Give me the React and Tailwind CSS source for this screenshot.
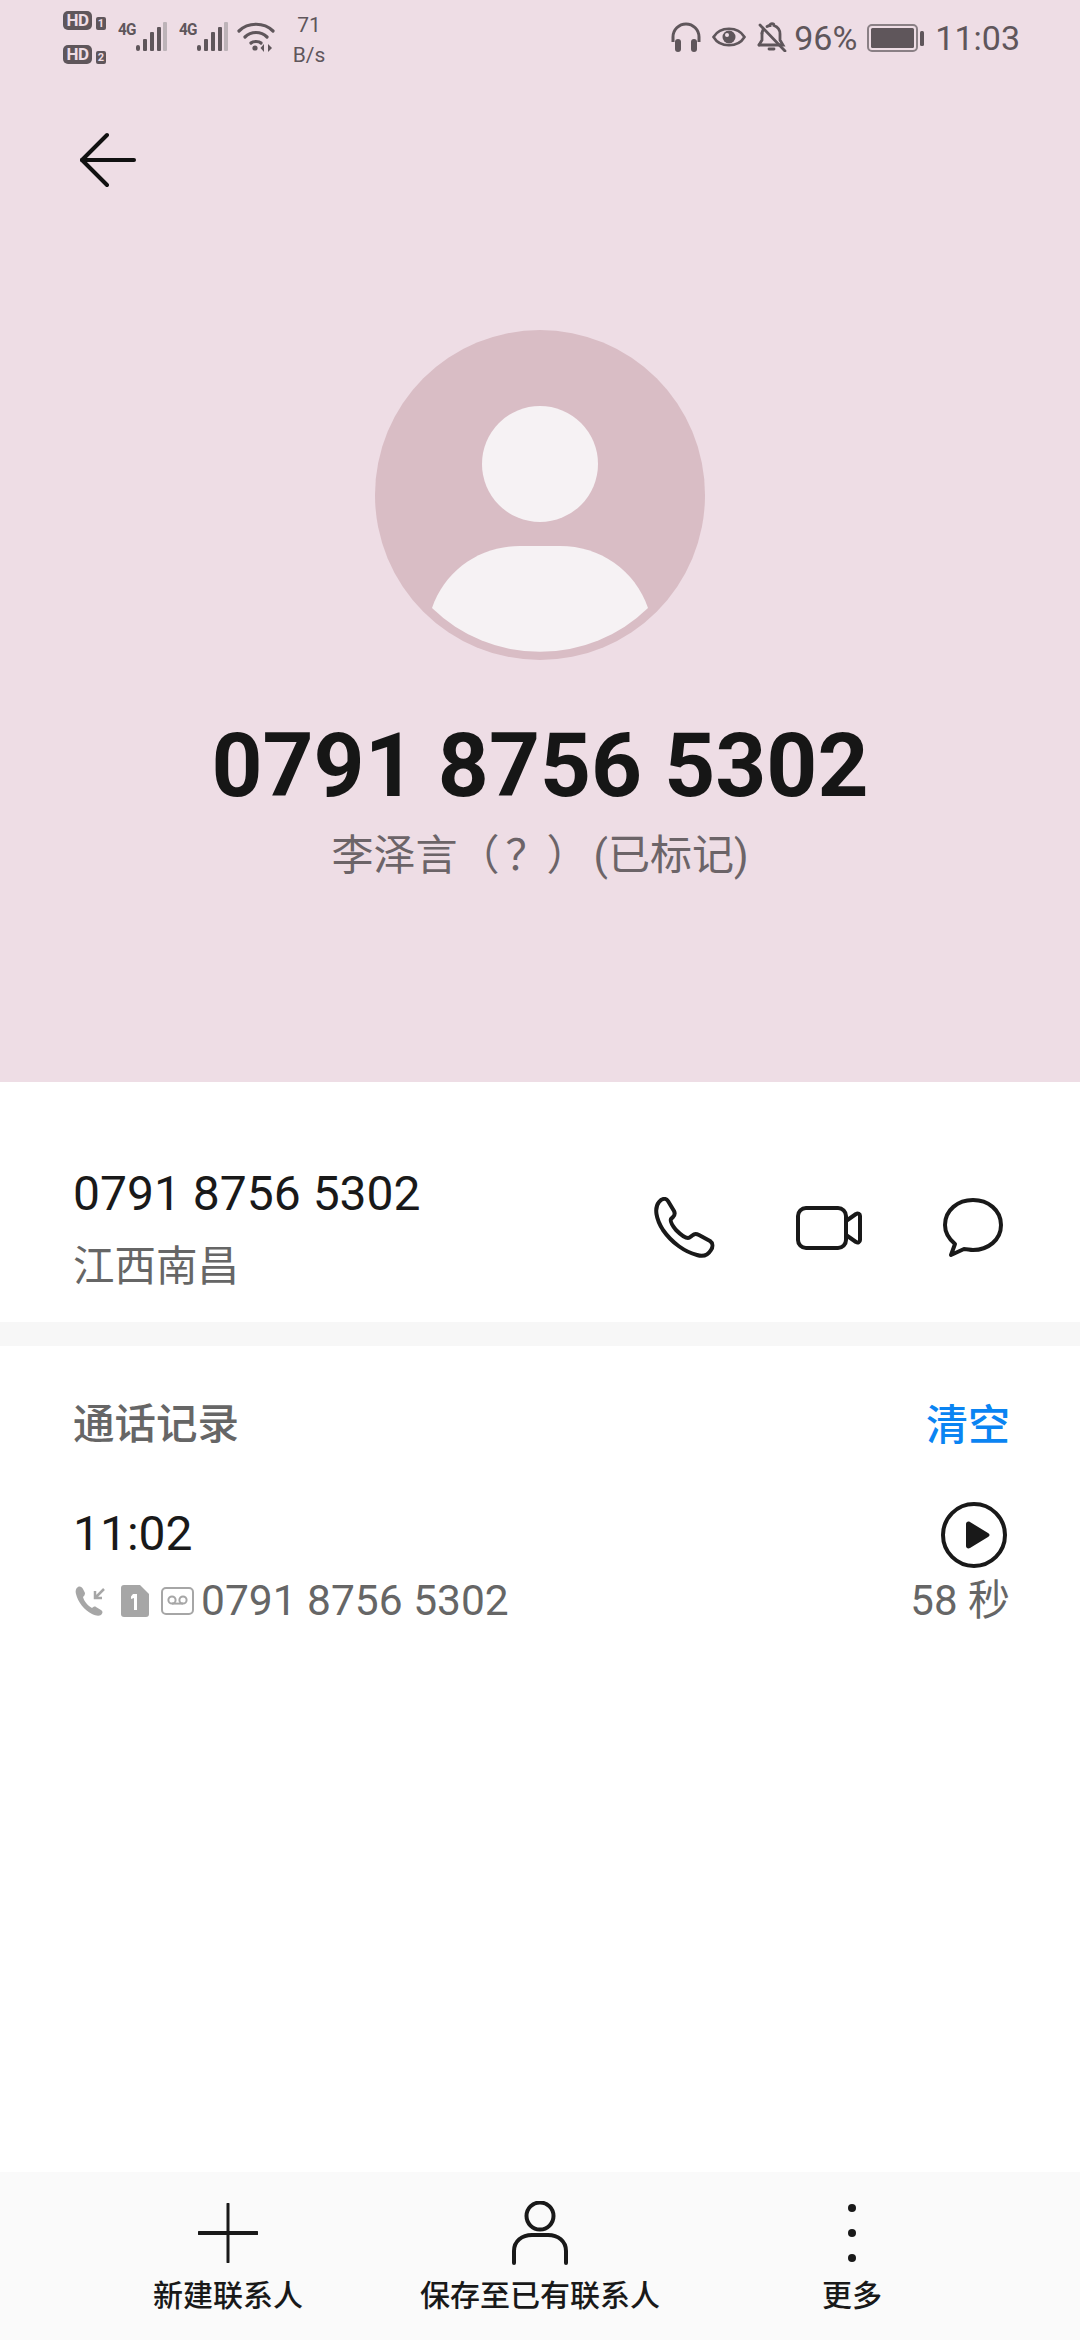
import React from 'react'

const font = { fontFamily: 'Roboto, "Noto Sans CJK SC", sans-serif' }

function Bars() {
  return (
    <svg width="32" height="30" viewBox="0 0 32 30" className="mt-[22px]">
      <rect x="1" y="23" width="4" height="6" rx="2" fill="#5f565b" />
      <rect x="8" y="17" width="4" height="12" rx="1" fill="#5f565b" />
      <rect x="15" y="10" width="4" height="19" rx="1" fill="#5f565b" />
      <rect x="22" y="5" width="4" height="24" rx="1" fill="#5f565b" />
      <rect x="28" y="0" width="4" height="29" rx="1" fill="#bdb3b8" />
    </svg>
  )
}

function Sim({ n, mt }) {
  return (
    <div className={`flex items-end gap-[4px] ${mt}`}>
      <div className="w-[29px] h-[19px] rounded-[5px] bg-[#5f565b] flex items-center justify-center text-[#eedde5] text-[17px] tracking-[-0.5px] leading-none font-bold">HD</div>
      <div className="w-[10px] h-[13px] rounded-[2px] bg-[#5f565b] flex items-center justify-center text-[#eedde5] text-[11px] leading-none font-bold">{n}</div>
    </div>
  )
}

function FourG() {
  return <span className="w-[17px] ml-[12px] mt-[21px] text-[17px] leading-[16px] font-bold tracking-[-1px] scale-x-90 origin-left">4G</span>
}

function StatusBar() {
  return (
    <div className="h-[72px] flex justify-between pl-[63px] pr-[60px] text-[#5f565b]">
      <div className="flex items-start">
        <div className="flex flex-col pt-[11px]">
          <Sim n="1" />
          <Sim n="2" mt="mt-[15px]" />
        </div>
        <FourG />
        <Bars />
        <FourG />
        <Bars />
        <svg width="38" height="30" viewBox="0 0 38 30" fill="none" stroke="#5f565b" strokeWidth="3.2" strokeLinecap="round" className="ml-[9px] mt-[22px]">
          <path d="M2 9C11 0 27 0 36 9" />
          <path d="M8 15C14 9 24 9 30 15" />
          <path d="M14 21C16 19 22 19 24 21" />
          <circle cx="18" cy="26" r="2.6" fill="#5f565b" stroke="none" />
          <path d="M27 22L23.5 26L27 30ZM31 22L35 26L31 30Z" fill="#5f565b" stroke="none" />
        </svg>
        <div className="w-[40px] ml-[14px] mt-[10px] flex flex-col items-center text-[21px] leading-[30px]">
          <span>71</span>
          <span>B/s</span>
        </div>
      </div>
      <div className="flex items-start">
        <svg width="32" height="30" viewBox="0 0 32 30" fill="none" className="mt-[22px]">
          <path d="M3 20V15A13 13 0 0 1 29 15V20" stroke="#5f565b" strokeWidth="3" />
          <rect x="5" y="17" width="6" height="13" rx="3" fill="#5f565b" />
          <rect x="21" y="17" width="6" height="13" rx="3" fill="#5f565b" />
        </svg>
        <svg width="34" height="24" viewBox="0 0 34 24" fill="none" className="ml-[10px] mt-[25px]">
          <path d="M1.5 12C8 1 26 1 32.5 12C26 23 8 23 1.5 12Z" stroke="#5f565b" strokeWidth="2.6" />
          <circle cx="17" cy="12" r="6.5" fill="#5f565b" />
          <circle cx="15" cy="10" r="2" fill="#eedde5" />
        </svg>
        <svg width="30" height="30" viewBox="0 0 30 30" fill="none" stroke="#5f565b" strokeWidth="2.8" strokeLinecap="round" className="ml-[11px] mt-[22px]">
          <path d="M5 11.5C5 10 5.5 9 6 8M10 4.5C11 4 12 3.5 13 3.5C13 1 17 1 17 3.5C21 5 23 8 23 12V18L26 23H2" />
          <path d="M5 11V18L2 23" />
          <path d="M12 27H17" />
          <path d="M3 3L28 29" />
        </svg>
        <span className="ml-[7px] mt-[19px] text-[34px] leading-[38px]">96%</span>
        <svg width="57" height="28" viewBox="0 0 57 28" className="ml-[10px] mt-[24px]">
          <rect x="1" y="1" width="49" height="26" rx="4" fill="none" stroke="#8a8085" strokeWidth="2" />
          <rect x="4" y="4" width="43" height="20" rx="1.5" fill="#5f565b" />
          <rect x="53" y="7" width="4" height="15" rx="1.5" fill="#5f565b" />
        </svg>
        <span className="ml-[11px] mt-[19px] text-[34px] leading-[38px]">11:03</span>
      </div>
    </div>
  )
}

function Header() {
  return (
    <section className="h-[1082px] bg-[#eedde5] shrink-0">
      <StatusBar />
      <div className="pl-[80px] pt-[60px]">
        <svg width="56" height="56" viewBox="0 0 56 56" fill="none" stroke="#111" strokeWidth="4" strokeLinecap="round" strokeLinejoin="round" className="block">
          <path d="M2 28H54" />
          <path d="M27 3L2 28L27 53" />
        </svg>
      </div>
      <div className="flex justify-center mt-[142px]">
        <svg width="330" height="330" viewBox="0 0 330 330" className="block">
          <circle cx="165" cy="165" r="165" fill="#d9bdc5" />
          <circle cx="165" cy="134" r="58" fill="#f6f2f4" />
          <path d="M57 278C70 240 105 216 145 216H185C225 216 260 240 273 278A155 155 0 0 1 57 278Z" fill="#f6f2f4" />
        </svg>
      </div>
      <h1 className="mt-[51px] text-center text-[89px] leading-[110px] font-bold text-[#161616]">0791 8756 5302</h1>
      <p className="mt-[7px] text-center text-[42px] leading-[56px] text-[#6c6468]">
        李泽言（<span className="ml-[6px] mr-[-1px]">？</span>）<span className="ml-[5px]">(已标记)</span>
      </p>
    </section>
  )
}

function NumberRow() {
  return (
    <section className="h-[240px] flex items-start pl-[73px] pr-[77px] pt-[82px]">
      <div className="flex-1">
        <div className="text-[48px] leading-[60px] text-[#191919]">0791 8756 5302</div>
        <div className="mt-[13px] text-[41.5px] leading-[60px] text-[#666]">江西南昌</div>
      </div>
      <div className="flex items-center gap-[81px] mt-[33px]">
        <svg width="62" height="62" viewBox="0 0 62 62" fill="none" stroke="#191919" strokeWidth="4" strokeLinejoin="round">
          <path d="M6 5C9 1 13 1 15 4L21 14C22 16 22 18 20 20L18 22C17 24 19 28 23 33C28 38 32 41 35 41C37 41 38 39 40 38C42 36 44 37 46 38L57 44C60 46 60 50 58 53C55 58 50 60 44 58C32 55 19 46 10 33C3 22 1 11 6 5Z" />
        </svg>
        <svg width="66" height="44" viewBox="0 0 66 44" fill="none" stroke="#191919" strokeWidth="4" strokeLinejoin="round">
          <rect x="2" y="2" width="48" height="40" rx="8" />
          <path d="M50 15L60 8C62 7 64 8 64 10V34C64 36 62 37 60 36L50 29" />
        </svg>
        <svg width="60" height="60" viewBox="0 0 60 60" fill="none" stroke="#191919" strokeWidth="4" strokeLinejoin="round">
          <path d="M30 2C45 2 58 12 58 27C58 42 45 52 30 52C27 52 24 51 21 51L8 57L12 46C6 41 2 35 2 27C2 12 15 2 30 2Z" />
        </svg>
      </div>
    </section>
  )
}

function CallLog() {
  return (
    <section className="flex-1 pl-[73px] pr-[70px] pt-[54px]">
      <div className="flex justify-between items-center h-[50px]">
        <span className="text-[41.5px] font-medium text-[#666]">通话记录</span>
        <span className="text-[42px] font-medium text-[#0a84f2]">清空</span>
      </div>
      <div className="flex justify-between mt-[54px]">
        <div>
          <div className="text-[48px] leading-[60px] text-[#191919]">11:02</div>
          <div className="flex items-center mt-[12px] h-[50px]">
            <svg width="32" height="30" viewBox="0 0 32 30" fill="#a6a6a6" className="ml-[2px]">
              <path d="M3 1C5 0 7 1 8 3L10 7C10 9 9 10 8 11C9 15 13 20 17 22C18 21 20 20 21 21L26 24C28 25 28 27 26 29C24 30 21 30 17 28C9 24 3 16 1 8C0 5 1 2 3 1Z" />
              <path d="M29 3L20 12M20 5V12H27" fill="none" stroke="#a6a6a6" strokeWidth="2.5" />
            </svg>
            <svg width="28" height="32" viewBox="0 0 28 32" className="ml-[14px]">
              <path d="M3 0H19L28 9V29C28 31 27 32 25 32H3C1 32 0 31 0 29V3C0 1 1 0 3 0Z" fill="#a6a6a6" />
              <path d="M12 9H16V25H13V13L10 14V11.5Z" fill="#fff" />
            </svg>
            <svg width="33" height="28" viewBox="0 0 33 28" fill="none" stroke="#a6a6a6" strokeWidth="2" className="ml-[12px]">
              <rect x="1" y="1" width="31" height="26" rx="4" />
              <circle cx="11" cy="13" r="3.6" />
              <circle cx="22" cy="13" r="3.6" />
              <path d="M11 16.6H22" />
            </svg>
            <span className="ml-[7px] text-[42.5px] leading-[50px] text-[#666]">0791 8756 5302</span>
          </div>
        </div>
        <div className="flex flex-col items-end">
          <svg width="66" height="66" viewBox="0 0 66 66" fill="none" className="mt-[-2px] mr-[3px]">
            <circle cx="33" cy="33" r="31" stroke="#191919" strokeWidth="4" />
            <path d="M25 22C25 20 27 19 29 20L47 31C49 32 49 34 47 35L29 46C27 47 25 46 25 44Z" fill="#191919" />
          </svg>
          <span className="mt-[8px] text-[42px] leading-[50px] text-[#666]">58 秒</span>
        </div>
      </div>
    </section>
  )
}

function BottomBar() {
  const items = [
    {
      label: '新建联系人',
      icon: (
        <svg width="60" height="60" viewBox="0 0 60 60" fill="none" stroke="#191919" strokeLinecap="round">
          <path d="M30 1V59" strokeWidth="3" />
          <path d="M1 30H59" strokeWidth="4" />
        </svg>
      ),
    },
    {
      label: '保存至已有联系人',
      icon: (
        <svg width="56" height="64" viewBox="0 0 56 64" fill="none" stroke="#191919" strokeWidth="4" strokeLinecap="round">
          <ellipse cx="28" cy="15" rx="13.5" ry="13.5" />
          <path d="M2 62V50C2 40 10 34 20 34H36C46 34 54 40 54 50V62" />
        </svg>
      ),
    },
    {
      label: '更多',
      icon: (
        <svg width="10" height="60" viewBox="0 0 10 60" fill="#191919">
          <circle cx="5" cy="5" r="4" />
          <circle cx="5" cy="30" r="4" />
          <circle cx="5" cy="55" r="4" />
        </svg>
      ),
    },
  ]

  return (
    <footer className="h-[168px] bg-[#fafafa] px-[72px] grid grid-cols-3 shrink-0">
      {items.map(item => (
        <div key={item.label} className="flex flex-col items-center pt-[29px]">
          <div className="h-[64px] flex items-center">{item.icon}</div>
          <span className="mt-[11px] text-[30px] leading-[40px] font-medium text-[#191919] whitespace-nowrap">{item.label}</span>
        </div>
      ))}
    </footer>
  )
}

export default function App() {
  return (
    <div className="w-[1080px] h-[2340px] flex flex-col bg-white overflow-hidden" style={font}>
      <Header />
      <NumberRow />
      <div className="h-[24px] bg-[#f7f7f7] shrink-0" />
      <CallLog />
      <BottomBar />
    </div>
  )
}
